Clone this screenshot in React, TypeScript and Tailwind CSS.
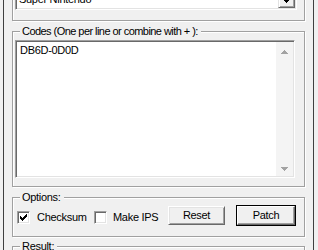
import type { ReactNode } from 'react';
import clsx from 'clsx';

// classic win32 tick, 7x7 pixels: [x, y, width]
const tick: [number, number, number][] = [
  [6, 0, 1],
  [5, 1, 2],
  [0, 2, 1],
  [4, 2, 3],
  [0, 3, 2],
  [3, 3, 3],
  [0, 4, 5],
  [1, 5, 3],
  [2, 6, 1],
];

function GroupBox({ label, className, children }: { label?: string; className?: string; children?: ReactNode }) {
  return (
    <div
      className={clsx(
        'relative w-[293px] shrink-0 border border-[#a0a0a0] shadow-[inset_1px_1px_0_#fff,1px_1px_0_#fff]',
        className
      )}
    >
      {label && (
        <span className="absolute left-[7px] top-[-7px] bg-[#f0f0f0] pl-[2px] pr-[3px] leading-[13px]">{label}</span>
      )}
      {children}
    </div>
  );
}

function CheckBox({ checked, className }: { checked?: boolean; className?: string }) {
  return (
    <div
      className={clsx(
        'mt-[13px] flex h-[13px] w-[13px] shrink-0 items-center justify-center border border-t-[#a0a0a0] border-l-[#a0a0a0] border-r-white border-b-white bg-white shadow-[inset_1px_1px_0_#696969,inset_-1px_-1px_0_#e3e3e3]',
        className
      )}
    >
      {checked && (
        <svg width="7" height="7" viewBox="0 0 7 7" shapeRendering="crispEdges">
          {tick.map(([x, y, w]) => (
            <rect key={`${x}-${y}`} x={x} y={y} width={w} height={1} fill="#000" />
          ))}
        </svg>
      )}
    </div>
  );
}

function Arrow({ down }: { down?: boolean }) {
  const rows = [
    [3, 1],
    [2, 3],
    [1, 5],
    [0, 7],
  ];
  return (
    <svg width="7" height="4" viewBox="0 0 7 4" shapeRendering="crispEdges">
      {rows.map(([x, w], i) => (
        <rect key={i} x={x} y={down ? 3 - i : i} width={w} height={1} fill="#a3a3a3" />
      ))}
    </svg>
  );
}

export default function App() {
  return (
    <div className="h-[250px] w-[318px] overflow-hidden bg-[#f0f0f0] pl-[3px] font-['Liberation_Sans',Arial,sans-serif] text-[11px] leading-[13px] tracking-[-0.3px] text-black">
      <div className="flex h-full w-[311px] flex-col border-x border-[#3f3f3f] pl-[8px]">
        {/* console picker, mostly scrolled out of view */}
        <GroupBox className="-mt-[20px] h-[41px]">
          <div className="ml-[2px] mt-[8px] flex h-[21px] w-[282px] border border-t-[#a0a0a0] border-l-[#a0a0a0] border-r-white border-b-white bg-white shadow-[inset_1px_1px_0_#696969,inset_-1px_-1px_0_#e3e3e3]">
            <div className="flex-1 pl-[3px] pt-[3px]">Super Nintendo</div>
            <div className="my-[1px] mr-[1px] flex w-[17px] items-center justify-center border border-t-[#e3e3e3] border-l-[#e3e3e3] border-r-[#696969] border-b-[#696969] bg-[#f0f0f0] shadow-[inset_1px_1px_0_#fff,inset_-1px_-1px_0_#a0a0a0]">
              <svg width="7" height="4" viewBox="0 0 7 4" shapeRendering="crispEdges" className="mt-[2px]">
                <rect x="0" y="0" width="7" height="1" fill="#000" />
                <rect x="1" y="1" width="5" height="1" fill="#000" />
                <rect x="2" y="2" width="3" height="1" fill="#000" />
                <rect x="3" y="3" width="1" height="1" fill="#000" />
              </svg>
            </div>
          </div>
        </GroupBox>

        <GroupBox label="Codes (One per line or combine with + ):" className="mt-[10px] h-[156px] [&>span]:tracking-[-0.55px]">
          <div className="ml-[2px] mt-[8px] flex h-[138px] w-[280px] border border-t-[#a0a0a0] border-l-[#a0a0a0] border-r-white border-b-white bg-white shadow-[inset_1px_1px_0_#696969,inset_-1px_-1px_0_#e3e3e3]">
            <div className="flex-1 pl-[4px] pt-[3px]">DB6D-0D0D</div>
            <div className="my-[1px] mr-[1px] flex w-[17px] flex-col items-center justify-between bg-[#f4f4f4] pb-[5px] pt-[8px]">
              <Arrow />
              <Arrow down />
            </div>
          </div>
        </GroupBox>

        <GroupBox label="Options:" className="mt-[10px] h-[40px]">
          <div className="flex items-start pl-[4px]">
            <CheckBox checked />
            <span className="ml-[7px] mt-[13px] w-[50px] shrink-0 leading-[13px]">Checksum</span>
            <CheckBox className="ml-[7px]" />
            <span className="ml-[6px] mt-[13px] w-[46px] shrink-0 leading-[13px]">Make IPS</span>
            <button className="ml-[9px] mt-[8px] h-[19px] w-[57px] shrink-0 border border-t-white border-l-white border-r-[#696969] border-b-[#696969] bg-[#f0f0f0] leading-[13px] shadow-[inset_1px_1px_0_#e3e3e3,inset_-1px_-1px_0_#a0a0a0]">
              Reset
            </button>
            <button className="ml-[11px] mt-[7px] h-[21px] w-[60px] shrink-0 border border-black">
              <div className="flex h-full w-full items-center justify-center border border-t-white border-l-white border-r-[#696969] border-b-[#696969] bg-[#f0f0f0] leading-[13px] shadow-[inset_-1px_-1px_0_#a0a0a0]">
                Patch
              </div>
            </button>
          </div>
        </GroupBox>

        <GroupBox label="Result:" className="mt-[9px] h-[60px]" />
      </div>
    </div>
  );
}
